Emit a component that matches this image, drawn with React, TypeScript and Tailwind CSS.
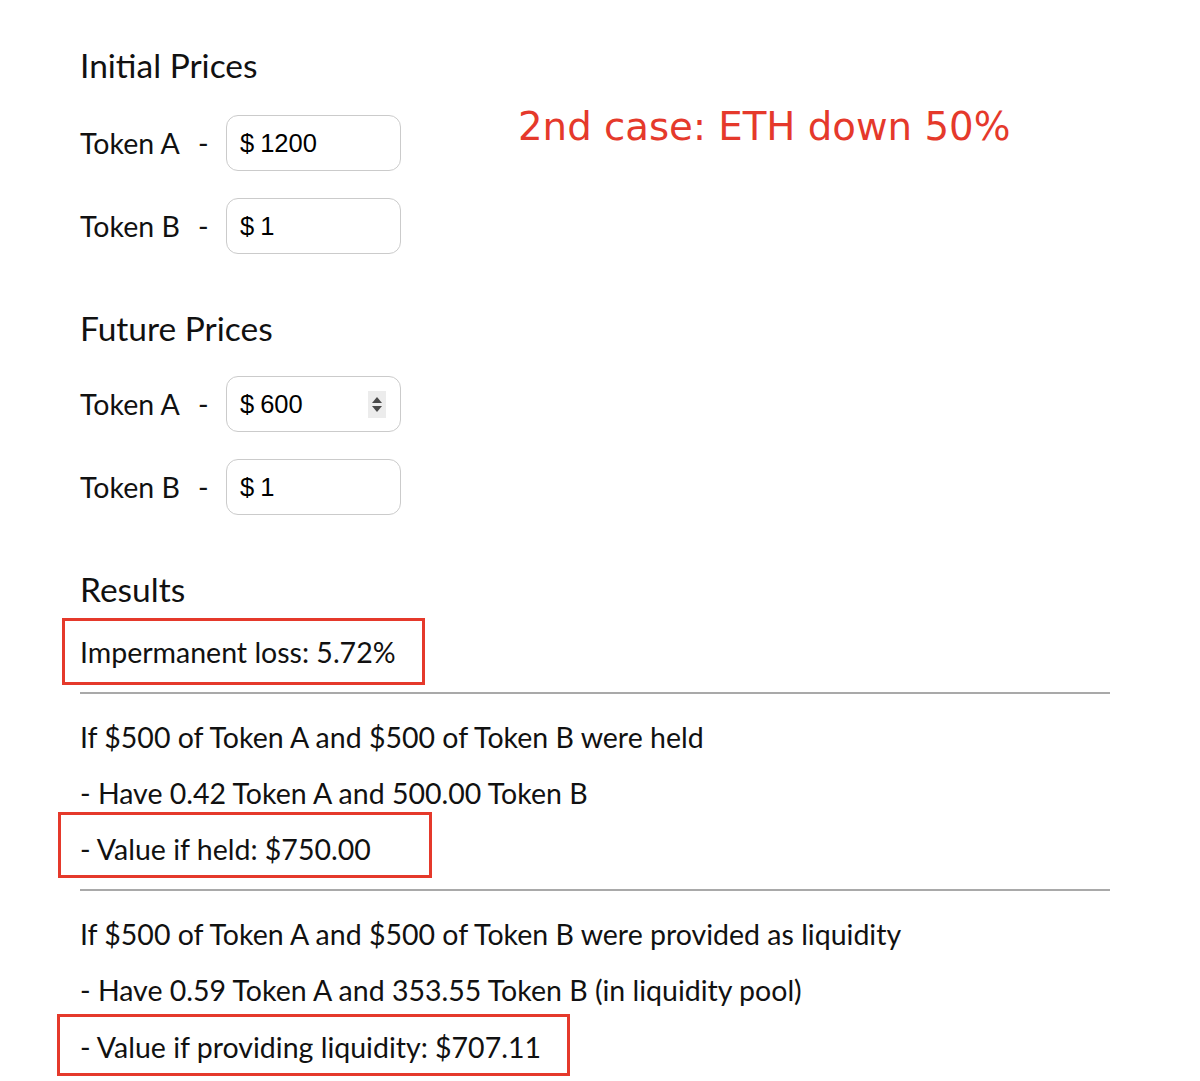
import { useState } from 'react'

const font = { fontFamily: 'Lato, "Open Sans", sans-serif' }

function PriceInput({ value, spinner = false }: { value: string; spinner?: boolean }) {
  const [val, setVal] = useState(value)
  return (
    <div className="flex h-[56px] w-[175px] items-center rounded-[12px] border-[1.5px] border-[#cbcbcb] bg-white pl-[13px] pr-[14px] text-[25.5px] text-black [font-family:'Liberation_Sans',Arial,sans-serif]">
      <span className="mr-[6px]">$</span>
      <input
        value={val}
        onChange={(e) => setVal(e.target.value)}
        className="w-full min-w-0 bg-transparent outline-none"
      />
      {spinner && (
        <div className="flex h-[27px] w-[18px] shrink-0 flex-col items-center justify-center gap-[3px] bg-[#ececec]">
          <svg width="10" height="6" viewBox="0 0 10 6">
            <path d="M5 0L10 6H0z" fill="#4a4a4a" />
          </svg>
          <svg width="10" height="6" viewBox="0 0 10 6">
            <path d="M0 0h10L5 6z" fill="#4a4a4a" />
          </svg>
        </div>
      )}
    </div>
  )
}

function TokenRow({ label, value, spinner }: { label: string; value: string; spinner?: boolean }) {
  return (
    <div className="flex items-center">
      <div className="flex w-[146px] items-center">
        <span className="w-[118px]">{label}</span>
        <span>-</span>
      </div>
      <PriceInput value={value} spinner={spinner} />
    </div>
  )
}

export default function App() {
  return (
    <div className="min-h-[1081px] bg-white pl-[80px] pt-[45px] text-[28.5px] text-[#111]" style={font}>
      {/* Initial prices + annotation */}
      <div className="flex">
        <div className="w-[438px]">
          <h2 className="text-[33.5px] leading-[40px]">Initial Prices</h2>
          <div className="mt-[30px]">
            <TokenRow label="Token A" value="1200" />
          </div>
          <div className="mt-[27px]">
            <TokenRow label="Token B" value="1" />
          </div>
        </div>
        <div className="pt-[56px] text-[38.7px] leading-[52px] text-[#e5392b] [font-family:'DejaVu_Sans',Verdana,sans-serif]">
          2nd case: ETH down 50%
        </div>
      </div>

      {/* Future prices */}
      <h2 className="mt-[54px] text-[33.5px] leading-[40px]">Future Prices</h2>
      <div className="mt-[28px]">
        <TokenRow label="Token A" value="600" spinner />
      </div>
      <div className="mt-[27px]">
        <TokenRow label="Token B" value="1" />
      </div>

      {/* Results */}
      <h2 className="mt-[54px] text-[33.5px] leading-[40px]">Results</h2>
      <div className="relative mt-[15px] leading-[56px]">
        Impermanent loss: 5.72%
        <div className="absolute -left-[18px] -top-[6px] h-[67px] w-[363px] border-[3px] border-[#e5392b]" />
      </div>
      <hr className="mt-[12px] w-[1030px] border-0 border-t-2 border-[#a9a9a9]" />

      <div className="mt-[15px] leading-[56px]">
        <p>If $500 of Token A and $500 of Token B were held</p>
        <p>- Have 0.42 Token A and 500.00 Token B</p>
        <div className="relative">
          - Value if held: $750.00
          <div className="absolute -left-[22px] -top-[9px] h-[66px] w-[374px] border-[3px] border-[#e5392b]" />
        </div>
      </div>
      <hr className="mt-[12px] w-[1030px] border-0 border-t-2 border-[#a9a9a9]" />

      <div className="mt-[15px] leading-[56px]">
        <p>If $500 of Token A and $500 of Token B were provided as liquidity</p>
        <p>- Have 0.59 Token A and 353.55 Token B (in liquidity pool)</p>
        <div className="relative mt-[1px]">
          - Value if providing liquidity: $707.11
          <div className="absolute -left-[23px] -top-[5px] h-[62px] w-[513px] border-[3px] border-[#e5392b]" />
        </div>
      </div>
    </div>
  )
}
